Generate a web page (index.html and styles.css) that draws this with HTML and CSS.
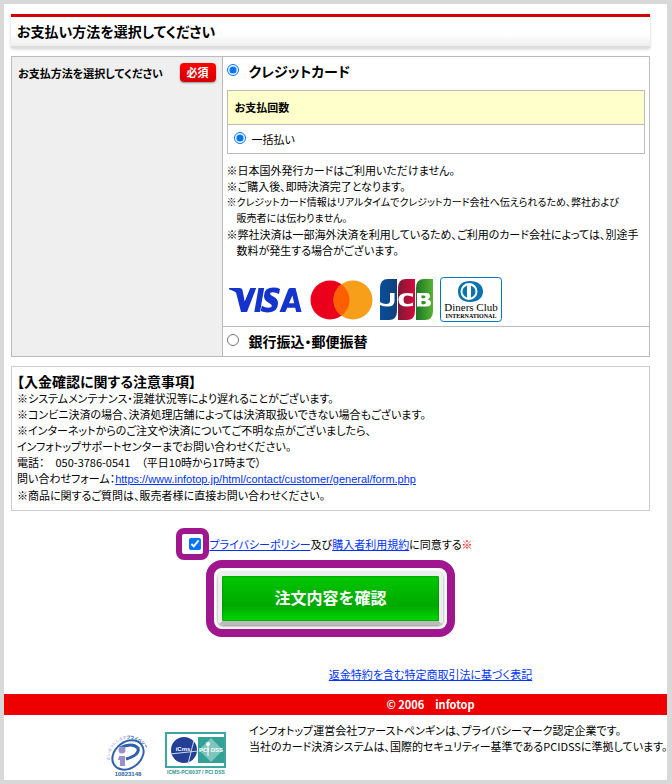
FILE: index.html
```
<!DOCTYPE html>
<html lang="ja">
<head>
    <meta charset="UTF-8">
    <meta name="viewport" content="width=device-width, initial-scale=1.0">
    <title>お支払い方法の選択</title>
    <link rel="stylesheet" href="styles.css">
</head>
<body>
    <div class="page">
    <form class="order-form" onsubmit="return false">
        <h2 class="page-title">お支払い方法を選択してください</h2>

        <table class="payment">
            <tr>
                <th class="payment-label" rowspan="2" scope="rowgroup">
                    <div class="label-row">
                        <span>お支払方法を選択してください</span>
                        <span class="required">必須</span>
                    </div>
                </th>
                <td class="payment-cell">
                    <div class="method">
                        <input type="radio" id="pay-card" name="method" checked>
                        <label for="pay-card">クレジットカード</label>
                    </div>
                    <table class="installments">
                        <tr><th scope="col">お支払回数</th></tr>
                        <tr>
                            <td>
                                <div class="option">
                                    <input type="radio" id="pay-once" name="installments" checked>
                                    <label for="pay-once">一括払い</label>
                                </div>
                            </td>
                        </tr>
                    </table>
                    <ul class="card-notes">
                        <li>※日本国外発行カードはご利用いただけません。</li>
                        <li>※ご購入後、即時決済完了となります。</li>
                        <li class="long">※クレジットカード情報はリアルタイムでクレジットカード会社へ伝えられるため、弊社および<br>販売者には伝わりません。</li>
                        <li>※弊社決済は一部海外決済を利用しているため、ご利用のカード会社によっては、別途手<br>数料が発生する場合がございます。</li>
                    </ul>
                    <div class="brands">
                        <svg width="74" height="26" viewBox="0 0 74 26" role="img" aria-label="VISA">
                            <g fill="#1434cb">
                                <path d="M0 1H10.500Q13 1 13.500 3L15.700 14.500 21.300 1H27.200L18 25H12L7.300 6.500Q7 5.300 5.900 4.700 3.500 3.200 0 2.200Z"/>
                                <path d="M29.500 1H35.200L31 25H25.300Z"/>
                                <path d="M51 2L50 7Q46.500 5.200 43.500 5.200 41 5.200 41 6.800 41 8 44.200 9.600 49 12 49 16.200 49 25.400 38.800 25.400 34.500 25.400 31.700 24L32.800 18.800Q36 20.800 39.500 20.800 42.800 20.800 42.800 18.600 42.800 17.200 39.300 15.400 35 13.200 35 9 35 0.600 44.600 0.600 48.300 0.600 51 2Z"/>
                                <path fill-rule="evenodd" d="M61 1H66.500L72.500 25H67.200L66.200 20.700H58.200L56.400 25H50.500L59 3Q60 1 61 1ZM63.400 8.500L60 16.300H65.200Z"/>
                            </g>
                        </svg>
                        <svg width="63" height="40" viewBox="0 0 63 40" role="img" aria-label="mastercard">
                            <circle cx="20" cy="20" r="19.500" fill="#eb001b"/>
                            <circle cx="43" cy="20" r="19.500" fill="#f79e1b"/>
                            <path d="M31.500 4.200a19.500 19.500 0 0 1 0 31.600a19.500 19.500 0 0 1 0-31.600z" fill="#ff5f00"/>
                        </svg>
                        <svg width="53" height="41" viewBox="0 0 53 41" role="img" aria-label="JCB">
                            <defs>
                                <linearGradient id="jcb-blue"><stop offset="0" stop-color="#07509c"/><stop offset="1" stop-color="#123f79"/></linearGradient>
                                <linearGradient id="jcb-red"><stop offset="0" stop-color="#7b1a35"/><stop offset="1" stop-color="#d8093c"/></linearGradient>
                                <linearGradient id="jcb-green"><stop offset="0" stop-color="#1c7427"/><stop offset="1" stop-color="#57b430"/></linearGradient>
                            </defs>
                            <path d="M8 0H17V32Q17 41 9 41H0V9Q0 0 8 0Z" fill="url(#jcb-blue)"/>
                            <path d="M26 0H35V32Q35 41 27 41H18V9Q18 0 26 0Z" fill="url(#jcb-red)"/>
                            <path d="M44 0H53V32Q53 41 45 41H36V9Q36 0 44 0Z" fill="url(#jcb-green)"/>
                            <path d="M10 14H14.500V22Q14.500 27.500 7.500 27.500 3 27.500 0 26V23Q3 25 6 25 10 25 10 22Z" fill="#fff"/>
                            <path d="M33 14.500V18Q30 16.500 27.500 16.500 23.500 16.500 23.500 20.700 23.500 25 27.500 25 30 25 33 23.500V26.800Q30 27.500 27 27.500 18.500 27.500 18.500 20.700 18.500 14 27 14 30 14 33 14.500Z" fill="#fff"/>
                            <path fill-rule="evenodd" d="M37 14H46.500Q50 14 50 17 50 19.800 47 20.300 51 21 51 24 51 27.500 46.500 27.500H37ZM41.500 16.500V19.300H43.500Q45.500 19.300 45.500 17.900 45.500 16.500 43.500 16.500ZM41.500 22V25.200H44Q46 25.200 46 23.600 46 22 44 22Z" fill="#fff"/>
                        </svg>
                        <svg width="62" height="45" viewBox="0 0 62 45" role="img" aria-label="Diners Club International">
                            <rect x="0.500" y="0.500" width="61" height="44" rx="3" fill="#fff" stroke="#0079b8"/>
                            <path fill-rule="evenodd" d="M30 4C37.500 4 43 8 43 14.500S37.500 25 30 25 18 21 18 14.500 22.500 4 30 4ZM29 6A8.500 8.500 0 1 0 29 23 8.500 8.500 0 1 0 29 6Z" fill="#0a72ad"/>
                            <path d="M27 8.500V20.500Q22.500 18.500 22.500 14.500T27 8.500ZM31 8.500Q35.500 10.500 35.500 14.500T31 20.500Z" fill="#0a72ad"/>
                            <text x="31" y="34" class="diners-name">Diners Club</text>
                            <text x="31" y="41" class="diners-sub">INTERNATIONAL</text>
                        </svg>
                    </div>
                </td>
            </tr>
            <tr>
                <td class="bank-cell">
                    <div class="method">
                        <input type="radio" id="pay-bank" name="method">
                        <label for="pay-bank">銀行振込・郵便振替</label>
                    </div>
                </td>
            </tr>
        </table>

        <div class="notice">
            <h3>【入金確認に関する注意事項】</h3>
            <p>※システムメンテナンス・混雑状況等により遅れることがございます。</p>
            <p>※コンビニ決済の場合、決済処理店舗によっては決済取扱いできない場合もございます。</p>
            <p>※インターネットからのご注文や決済についてご不明な点がございましたら、</p>
            <p>インフォトップサポートセンターまでお問い合わせください。</p>
            <p>電話：　050-3786-0541　（平日10時から17時まで）</p>
            <p>問い合わせフォーム：<a class="url" href="#contact">https://www.infotop.jp/html/contact/customer/general/form.php</a></p>
            <p>※商品に関するご質問は、販売者様に直接お問い合わせください。</p>
        </div>

        <div class="agree">
            <span class="check-frame"><input type="checkbox" id="agree" aria-labelledby="agree-text" checked></span>
            <span id="agree-text"><a href="#privacy">プライバシーポリシー</a>及び<a href="#terms">購入者利用規約</a><label for="agree">に同意する</label><span class="mark">※</span></span>
        </div>

        <div class="submit-frame">
            <button type="submit">注文内容を確認</button>
        </div>

        <div class="law"><a href="#law">返金特約を含む特定商取引法に基づく表記</a></div>
    </form>

    <div class="copyright">© 2006　infotop</div>

    <div class="footer">
        <svg width="46" height="46" viewBox="0 0 46 46" role="img" aria-label="プライバシーマーク">
            <defs>
                <path id="pmark-arc" d="M5 29A19 19 0 0 1 42 21"/>
            </defs>
            <text class="pmark-text"><textPath href="#pmark-arc">たいせつにします<tspan class="pmark-name">プライバシー</tspan></textPath></text>
            <ellipse cx="23" cy="24" rx="17" ry="13" transform="rotate(-38 23 24)" fill="none" stroke="#2f62ab" stroke-width="2"/>
            <path d="M15 17Q27 11 33 17 35 24 21 28" fill="none" stroke="#2f62ab" stroke-width="3"/>
            <circle cx="17" cy="19" r="3.500" fill="#9a91cb"/>
            <path d="M14 25H20V35H15V29H13Z" fill="#9a91cb"/>
            <text x="23" y="45" class="pmark-no">10823148</text>
        </svg>
        <svg width="62" height="44" viewBox="0 0 62 44" role="img" aria-label="ICMS PCI DSS">
            <rect x="1" y="1" width="59" height="34" fill="#fff" stroke="#3ca79f" stroke-width="2"/>
            <circle cx="19" cy="18" r="13" fill="#233f96"/>
            <path d="M5 22L33 19M23 32L29 8" stroke="#c9d6ee" fill="none"/>
            <text x="18" y="19" class="seal-text">iCms</text>
            <rect x="33" y="5" width="26" height="26" fill="#32a198"/>
            <path d="M46 6L58 18 46 30 34 18Z" fill="#7fc5be"/>
            <circle cx="43" cy="12" r="2" fill="#fff"/>
            <path d="M43 14V24" stroke="#fff"/>
            <text x="46" y="20" class="seal-text">PCI DSS</text>
            <text x="31" y="42" class="seal-no">ICMS-PCI0037 / PCI DSS</text>
        </svg>
        <div class="footer-text">
            <p>インフォトップ運営会社ファーストペンギンは、プライバシーマーク認定企業です。</p>
            <p>当社のカード決済システムは、国際的セキュリティー基準であるPCIDSSに準拠しています。</p>
        </div>
    </div>
    </div>
</body>
</html>
```
FILE: styles.css
```
* {
    box-sizing: border-box;
}
body {
    margin: 0;
    padding: 4px 5px 5px 4px;
    background: #d9d9d9;
    font-family: "Noto Sans CJK JP", sans-serif;
    font-size: 11px;
    line-height: 16px;
    font-feature-settings: "palt";
    color: #000;
}
h2, h3, p, ul {
    margin: 0;
    padding: 0;
}
ul {
    list-style: none;
}
a {
    color: #03f;
}
input {
    width: 12px;
    height: 12px;
    margin: 0;
    flex: none;
}
.page {
    background: #fff;
    overflow: hidden;
}
.order-form {
    padding: 10px 17px 12px 7px;
}
.page-title {
    height: 34px;
    padding: 0 6px;
    border-top: 3px solid #d40000;
    border-bottom: 2px solid #ddd;
    background: linear-gradient(#fff 60%, #eee);
    box-shadow: 0 1px 3px rgba(0, 0, 0, 0.2);
    font-size: 14px;
    line-height: 29px;
}

/* payment method table */
table {
    width: 100%;
    border-collapse: collapse;
}
th {
    text-align: left;
}
.payment {
    margin-top: 8px;
    table-layout: fixed;
}
.payment > tbody > tr > th,
.payment > tbody > tr > td,
.installments th,
.installments td {
    border: 1px solid #bbb;
    vertical-align: top;
}
.payment .payment-label {
    width: 33%;
    padding: 6px;
    background: #efefef;
}
.label-row {
    display: flex;
    justify-content: space-between;
    align-items: center;
    white-space: nowrap;
}
.required {
    padding: 1px 7px 2px;
    border-radius: 4px;
    background: linear-gradient(#f00, #d40000);
    box-shadow: 0 1px 2px rgba(0, 0, 0, 0.4);
    color: #fff;
}
.payment-cell {
    padding: 4px;
}
.bank-cell {
    padding: 4px;
}
.method {
    display: flex;
    gap: 10px;
    font-size: 14px;
    font-weight: bold;
    line-height: 21px;
}
.method input {
    margin-top: 3px;
}
.installments {
    margin-top: 8px;
}
.installments th {
    padding: 8px 7px 9px;
    background: #ffc;
}
.installments td {
    padding: 6px;
}
.option {
    display: flex;
    align-items: center;
    gap: 6px;
}
.option input {
    margin-top: -2px;
}
.card-notes {
    margin-top: 8px;
    white-space: nowrap;
}
.card-notes li {
    padding-left: 10px;
    text-indent: -10px;
}
.card-notes .long {
    font-size: 10px;
}
.brands {
    display: flex;
    align-items: center;
    gap: 7px;
    margin-top: 19px;
    padding-left: 2px;
}
.diners-name {
    font-family: "Liberation Serif", serif;
    font-size: 11px;
    text-anchor: middle;
}
.diners-sub {
    font-family: "Liberation Serif", serif;
    font-size: 6px;
    font-weight: bold;
    text-anchor: middle;
}

/* notice */
.notice {
    margin-top: 9px;
    padding: 5px 5px 7px;
    border: 1px solid #ccc;
    white-space: nowrap;
}
.notice h3 {
    font-size: 14px;
    line-height: 18px;
}
.url {
    font-family: "Liberation Sans", Arial, sans-serif;
}

/* agreement and submit */
.agree {
    display: flex;
    justify-content: center;
    align-items: center;
    margin-top: 17px;
    padding-right: 12px;
}
.check-frame {
    display: flex;
    justify-content: center;
    align-items: center;
    width: 33px;
    height: 32px;
    padding-left: 4px;
    border: 6px solid #a0168f;
    border-radius: 8px;
}
.mark {
    color: #e00;
}
.submit-frame {
    width: 249px;
    margin: 0 auto;
    padding: 4px;
    border: 8px solid #a0168f;
    border-radius: 16px;
}
.submit-frame button {
    display: block;
    width: 100%;
    height: 53px;
    padding: 0 0 4px;
    border: 4px solid #eee;
    border-bottom-color: #bbb;
    border-radius: 5px;
    background: linear-gradient(#00c800, #00a800 65%, #00d800) padding-box;
    box-shadow: 0 1px 3px rgba(0, 0, 0, 0.5), inset 0 0 2px #060;
    color: #fff;
    font-family: inherit;
    font-size: 16px;
    font-weight: bold;
    cursor: pointer;
}
.law {
    margin-top: 29px;
    padding-left: 200px;
    text-align: center;
}

/* footer */
.copyright {
    padding-left: 190px;
    background: #e00;
    color: #fff;
    font-weight: bold;
    line-height: 21px;
    text-align: center;
}
.footer {
    display: flex;
    align-items: center;
    height: 65px;
    padding: 7px 0 3px 101px;
}
.footer svg {
    flex: none;
    margin-top: 8px;
    margin-right: 14px;
}
.footer-text {
    align-self: flex-start;
    padding-left: 8px;
    white-space: nowrap;
}
.pmark-text {
    font-size: 4px;
    fill: #8d90cc;
}
.pmark-name {
    font-weight: bold;
    fill: #2f62ab;
}
.pmark-no,
.seal-no {
    font-family: "Liberation Sans", sans-serif;
    font-size: 6px;
    font-weight: bold;
    fill: #2f62ab;
    text-anchor: middle;
}
.seal-no {
    font-size: 5px;
    fill: #2b968e;
}
.seal-text {
    font-family: "Liberation Sans", sans-serif;
    font-size: 6px;
    font-weight: bold;
    fill: #fff;
    text-anchor: middle;
}
```
